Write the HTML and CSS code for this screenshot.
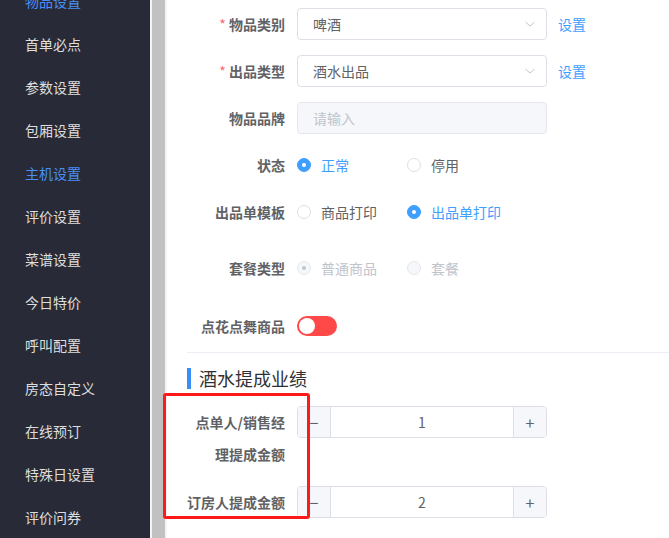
FILE: index.html
```html
<!DOCTYPE html>
<html lang="zh-CN">

<head>
    <meta charset="UTF-8">
    <meta name="viewport" content="width=device-width, initial-scale=1.0">
    <title>物品设置</title>
    <link rel="stylesheet" href="styles.css">
</head>

<body>
    <div class="page">
        <div class="sidebar">
            <ul class="menu">
                <li class="menu-item active">物品设置</li>
                <li class="menu-item">首单必点</li>
                <li class="menu-item">参数设置</li>
                <li class="menu-item">包厢设置</li>
                <li class="menu-item active">主机设置</li>
                <li class="menu-item">评价设置</li>
                <li class="menu-item">菜谱设置</li>
                <li class="menu-item">今日特价</li>
                <li class="menu-item">呼叫配置</li>
                <li class="menu-item">房态自定义</li>
                <li class="menu-item">在线预订</li>
                <li class="menu-item">特殊日设置</li>
                <li class="menu-item">评价问券</li>
            </ul>
        </div>
        <div class="scrollbar"><div class="thumb"></div></div>

        <div class="main">
            <div class="form-item">
                <label class="label"><span class="star">*</span> 物品类别</label>
                <div class="select">
                    <span class="select-text">啤酒</span>
                    <svg class="arrow" width="12" height="12" viewBox="0 0 12 12"><path d="M1.5 4 L6 8 L10.5 4" fill="none" stroke="#c0c4cc" stroke-width="1"/></svg>
                </div>
                <a class="link">设置</a>
            </div>

            <div class="form-item">
                <label class="label"><span class="star">*</span> 出品类型</label>
                <div class="select">
                    <span class="select-text">酒水出品</span>
                    <svg class="arrow" width="12" height="12" viewBox="0 0 12 12"><path d="M1.5 4 L6 8 L10.5 4" fill="none" stroke="#c0c4cc" stroke-width="1"/></svg>
                </div>
                <a class="link">设置</a>
            </div>

            <div class="form-item">
                <label class="label">物品品牌</label>
                <div class="select disabled">
                    <span class="placeholder">请输入</span>
                </div>
            </div>

            <div class="form-item">
                <label class="label">状态</label>
                <div class="radio-group">
                    <span class="radio checked"><span class="radio-inner"></span>正常</span>
                    <span class="radio"><span class="radio-inner"></span>停用</span>
                </div>
            </div>

            <div class="form-item">
                <label class="label">出品单模板</label>
                <div class="radio-group">
                    <span class="radio"><span class="radio-inner"></span>商品打印</span>
                    <span class="radio checked"><span class="radio-inner"></span>出品单打印</span>
                </div>
            </div>

            <div class="form-item pad-9">
                <label class="label">套餐类型</label>
                <div class="radio-group">
                    <span class="radio disabled checked"><span class="radio-inner"></span>普通商品</span>
                    <span class="radio disabled"><span class="radio-inner"></span>套餐</span>
                </div>
            </div>

            <div class="form-item pad-11 last">
                <label class="label">点花点舞商品</label>
                <div class="switch"><span class="switch-core"></span></div>
            </div>

            <div class="divider"></div>

            <div class="section-title">酒水提成业绩</div>

            <div class="form-item tall">
                <label class="label">点单人/销售经理提成金额</label>
                <div class="number">
                    <span class="num-btn minus">−</span>
                    <span class="num-value">1</span>
                    <span class="num-btn plus">+</span>
                </div>
            </div>

            <div class="form-item">
                <label class="label">订房人提成金额</label>
                <div class="number">
                    <span class="num-btn minus">−</span>
                    <span class="num-value">2</span>
                    <span class="num-btn plus">+</span>
                </div>
            </div>
        </div>
    </div>

    <!-- 标注框 -->
    <div class="mark"></div>
</body>

</html>
```

FILE: styles.css
```css
* {
    box-sizing: border-box;
}

body {
    margin: 0;
    font-family: "Noto Sans CJK SC", "Noto Sans", sans-serif;
    font-size: 14px;
    color: #606266;
    background: #fff;
}

.page {
    display: flex;
    height: 538px;
    overflow: hidden;
}

.sidebar {
    width: 150px;
    background-color: #282b37;
    flex-shrink: 0;
}

.menu {
    list-style: none;
    margin: -20px 0 0;
    padding: 0;
}

.menu-item {
    height: 43px;
    line-height: 43px;
    padding-left: 25px;
    color: #dedede;
    font-size: 14px;
}

.menu-item.active {
    color: #4a8ef6;
}

.scrollbar {
    width: 17px;
    flex-shrink: 0;
    background: #f4f4f4;
    padding: 0 2px;
}

.thumb {
    height: 100%;
    background: #c1c1c1;
}

.main {
    flex: 1;
    padding: 8px 0 0 20px;
}

.form-item {
    display: flex;
    align-items: flex-start;
    margin-bottom: 15px;
}

.form-item.pad-9 {
    padding-top: 9px;
}

.form-item.pad-11 {
    padding-top: 11px;
}

.form-item.last {
    margin-bottom: 0;
}

.form-item.tall {
    margin-bottom: 16px;
}

.label {
    width: 110px;
    flex-shrink: 0;
    padding-right: 12px;
    text-align: right;
    line-height: 32px;
    font-weight: 600;
    color: #606266;
}

.star {
    color: #f56c6c;
    font-weight: normal;
}

.select {
    width: 250px;
    height: 32px;
    border: 1px solid #dcdfe6;
    border-radius: 4px;
    padding: 0 10px 0 15px;
    display: flex;
    align-items: center;
    justify-content: space-between;
    line-height: 30px;
}

.select.disabled {
    background: #f5f7fa;
    border-color: #e4e7ed;
}

.placeholder {
    color: #c0c4cc;
}

.arrow {
    display: block;
}

.link {
    margin-left: 11px;
    line-height: 32px;
    color: #409eff;
    cursor: pointer;
}

.radio-group {
    display: flex;
    height: 32px;
    align-items: center;
}

.radio {
    width: 110px;
    display: flex;
    align-items: center;
    color: #606266;
}

.radio-inner {
    width: 14px;
    height: 14px;
    border: 1px solid #dcdfe6;
    border-radius: 50%;
    background: #fff;
    margin-right: 10px;
    position: relative;
}

.radio.checked {
    color: #409eff;
}

.radio.checked .radio-inner {
    background: #409eff;
    border-color: #409eff;
}

.radio.checked .radio-inner::after {
    content: "";
    position: absolute;
    left: 4px;
    top: 4px;
    width: 4px;
    height: 4px;
    border-radius: 50%;
    background: #fff;
}

.radio.disabled {
    color: #c0c4cc;
}

.radio.disabled .radio-inner {
    background: #f5f7fa;
    border-color: #e4e7ed;
}

.radio.disabled.checked .radio-inner::after {
    background: #c0c4cc;
}

.switch {
    height: 32px;
    display: flex;
    align-items: center;
}

.switch-core {
    width: 40px;
    height: 20px;
    border-radius: 10px;
    background: #ff4949;
    position: relative;
}

.switch-core::after {
    content: "";
    position: absolute;
    left: 2px;
    top: 2px;
    width: 16px;
    height: 16px;
    border-radius: 50%;
    background: #fff;
}

.divider {
    height: 1px;
    background: #ebeef5;
    margin-top: 10px;
}

.section-title {
    margin: 15px 0 17px;
    border-left: 4px solid #3a8ef7;
    padding-left: 8px;
    height: 21px;
    line-height: 21px;
    font-size: 18px;
    color: #303133;
}

.number {
    width: 250px;
    height: 32px;
    border: 1px solid #dcdfe6;
    border-radius: 4px;
    display: flex;
    overflow: hidden;
}

.num-btn {
    width: 33px;
    background: #f5f7fa;
    text-align: center;
    line-height: 30px;
    color: #606266;
    font-size: 16px;
}

.minus {
    border-right: 1px solid #dcdfe6;
}

.plus {
    border-left: 1px solid #dcdfe6;
}

.num-value {
    flex: 1;
    text-align: center;
    line-height: 30px;
}

.mark {
    position: absolute;
    left: 163px;
    top: 393px;
    width: 147px;
    height: 126px;
    border: 3px solid #ff1a1a;
    border-radius: 3px;
}
```
